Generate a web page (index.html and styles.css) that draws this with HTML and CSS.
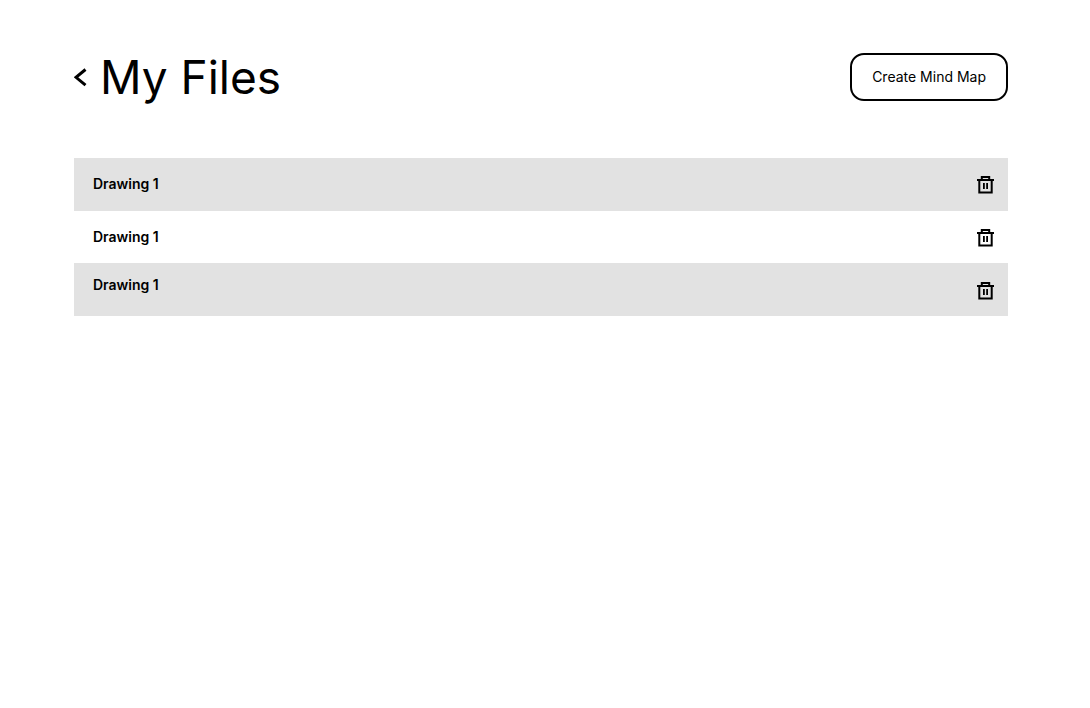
FILE: index.html
```html
<!DOCTYPE html>
<html lang="en">
<head>
<meta charset="utf-8">
<meta name="viewport" content="width=device-width, initial-scale=1">
<title>My Files</title>
<link rel="stylesheet" href="styles.css">
</head>
<body>
<svg class="sprite" aria-hidden="true">
  <symbol id="trash" viewBox="0 0 18 20">
    <path d="M1 6H18M5.8 6V3H13.2V6M3.3 6V18.5H15.7V6" fill="none" stroke="currentColor" stroke-width="2"/>
    <path d="M7.9 9V15M11.1 9V15" fill="none" stroke="currentColor" stroke-width="1.8"/>
  </symbol>
</svg>
<main class="page">
  <header class="header">
    <a class="back" href="#" aria-label="Back">
      <svg class="back-icon" viewBox="0 0 14 20" aria-hidden="true"><path d="M11.5 2.5L2 10.3L11.5 18.2" fill="none" stroke="currentColor" stroke-width="3"/></svg>
    </a>
    <h1 class="title">My Files</h1>
    <button class="create" type="button">Create Mind Map</button>
  </header>
  <ul class="files">
    <li class="file">
      <a class="file-name" href="#">Drawing 1</a>
      <button class="delete" type="button" aria-label="Delete Drawing 1"><svg class="trash-icon"><use href="#trash"/></svg></button>
    </li>
    <li class="file">
      <a class="file-name" href="#">Drawing 1</a>
      <button class="delete" type="button" aria-label="Delete Drawing 1"><svg class="trash-icon"><use href="#trash"/></svg></button>
    </li>
    <li class="file">
      <a class="file-name file-name-raised" href="#">Drawing 1</a>
      <button class="delete" type="button" aria-label="Delete Drawing 1"><svg class="trash-icon"><use href="#trash"/></svg></button>
    </li>
  </ul>
</main>
</body>
</html>
```
FILE: styles.css
```css
* {
  box-sizing: border-box;
}

body {
  margin: 0;
  background: #fff;
  color: #000;
  font-family: Inter, "Liberation Sans", sans-serif;
}

.sprite {
  display: none;
}

.page {
  padding: 48px 82px 48px 74px;
}

.header {
  display: flex;
  align-items: center;
}

.back {
  display: flex;
  color: inherit;
}

.back-icon {
  width: 14px;
  height: 20px;
}

.title {
  margin: 0 auto 0 12px;
  font-size: 46px;
  line-height: 58px;
  font-weight: 400;
}

.create {
  height: 48px;
  padding: 0 20px;
  border: 2px solid #000;
  border-radius: 14px;
  background: #fff;
  color: #000;
  font-family: inherit;
  font-size: 14px;
  line-height: 20px;
}

.files {
  display: grid;
  grid-auto-rows: 1fr;
  min-height: 158px;
  margin: 52px 0 0;
  padding: 0;
  list-style: none;
}

.file {
  display: flex;
  align-items: center;
  justify-content: space-between;
  padding: 0 14px 0 19px;
}

.file:nth-child(odd) {
  background: #e2e2e2;
}

.file-name {
  color: inherit;
  font-size: 14px;
  line-height: 20px;
  font-weight: 600;
  text-decoration: none;
}

.file-name-raised {
  padding-bottom: 10px;
}

.delete {
  display: flex;
  padding: 0;
  border: 0;
  background: none;
  color: inherit;
}

.trash-icon {
  width: 18px;
  height: 20px;
}
```
